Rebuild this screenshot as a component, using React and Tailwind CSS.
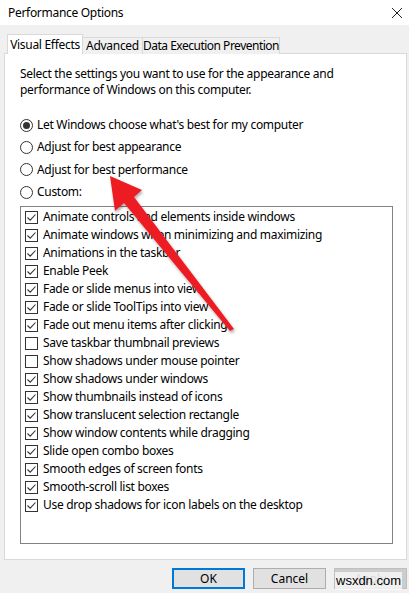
const font = { fontFamily: '"Noto Sans", "Liberation Sans", sans-serif' };

const effects = [
  ["Animate controls and elements inside windows", true],
  ["Animate windows when minimizing and maximizing", true],
  ["Animations in the taskbar", true],
  ["Enable Peek", true],
  ["Fade or slide menus into view", true],
  ["Fade or slide ToolTips into view", true],
  ["Fade out menu items after clicking", true],
  ["Save taskbar thumbnail previews", false],
  ["Show shadows under mouse pointer", false],
  ["Show shadows under windows", true],
  ["Show thumbnails instead of icons", true],
  ["Show translucent selection rectangle", true],
  ["Show window contents while dragging", true],
  ["Slide open combo boxes", true],
  ["Smooth edges of screen fonts", true],
  ["Smooth-scroll list boxes", true],
  ["Use drop shadows for icon labels on the desktop", true],
];

const radios = [
  ["Let Windows choose what's best for my computer", true],
  ["Adjust for best appearance", false],
  ["Adjust for best performance", false],
  ["Custom:", false],
];

const Radio = ({ label, on }) => (
  <div className="flex items-center h-[22.3px]">
    <span className="w-[13px] h-[13px] rounded-full border border-[#333] bg-white flex items-center justify-center">
      {on && <span className="w-[7px] h-[7px] rounded-full bg-[#333]" />}
    </span>
    <span className="ml-[4px]">{label}</span>
  </div>
);

const Check = ({ label, on }) => (
  <div className="flex items-center h-[18px]">
    <span className="w-[13px] h-[13px] border border-[#333] bg-white flex items-center justify-center">
      {on && (
        <svg width="11" height="11" viewBox="0 0 11 11">
          <path d="M1.5 5.5 L4.2 8.2 L9.5 2.5" fill="none" stroke="#333" strokeWidth="1.1" />
        </svg>
      )}
    </span>
    <span className="ml-[5px]">{label}</span>
  </div>
);

const App = () => {
  return (
    <div className="relative w-[409px] h-[593px] bg-[#f0f0f0] text-[12px] tracking-[-0.3px] text-black overflow-hidden" style={font}>
      {/* title bar */}
      <div className="h-[25px] bg-white flex items-center justify-between pl-[8px] pr-[6px]">
        <span>Performance Options</span>
        <svg width="12" height="12" viewBox="0 0 12 12">
          <path d="M1 1 L11 11 M11 1 L1 11" stroke="#222" strokeWidth="1" />
        </svg>
      </div>

      <div className="px-[4px] pt-[9px]">
        {/* tabs */}
        <div className="flex items-end h-[20px] pl-[3px] relative z-10 whitespace-nowrap">
          <div className="h-[20px] w-[76px] bg-white border border-b-0 border-[#d9d9d9] flex items-center justify-center">
            Visual Effects
          </div>
          <div className="h-[17px] w-[60px] bg-[#f0f0f0] border border-l-0 border-b-0 border-[#d9d9d9] flex items-center justify-center">
            Advanced
          </div>
          <div className="h-[17px] w-[137px] bg-[#f0f0f0] border border-l-0 border-b-0 border-[#d9d9d9] flex items-center justify-center tracking-[-0.5px]">
            Data Execution Prevention
          </div>
        </div>

        {/* panel */}
        <div className="-mt-[1px] h-[507px] w-[403px] bg-white border border-[#d9d9d9] pl-[15px] pr-[14px] pt-[12px]">
          <p className="leading-[16px]">
            Select the settings you want to use for the appearance and
            <br />
            performance of Windows on this computer.
          </p>
          <div className="mt-[16px]">
            {radios.map(([l, on]) => (
              <Radio key={l} label={l} on={on} />
            ))}
          </div>
          <div className="mt-[3px] h-[338px] w-[373px] border border-[#828282] pl-[4px] pt-[1px]">
            {effects.map(([l, on]) => (
              <Check key={l} label={l} on={on} />
            ))}
          </div>
        </div>
      </div>

      {/* buttons */}
      <div className="flex justify-end gap-[8px] pr-[2px] mt-[8px] tracking-normal">
        <button className="w-[73px] h-[21px] bg-[#e1e1e1] border-2 border-[#0078d7]">OK</button>
        <button className="w-[73px] h-[21px] bg-[#e1e1e1] border border-[#adadad]">Cancel</button>
        <button className="w-[73px] h-[21px] bg-[#cccccc] border border-[#bfbfbf] text-[#838383] leading-[12px] items-start">Apply</button>
      </div>

      {/* watermark */}
      <div className="absolute left-[335px] top-[572px] bg-white/70 px-[1px] leading-[18px] text-[13px] tracking-normal text-black" style={{ fontFamily: '"Liberation Sans", sans-serif' }}>
        wsxdn.com
      </div>

      {/* red arrow annotation */}
      <svg className="absolute left-0 top-0 pointer-events-none" width="409" height="593">
        <defs>
          <filter id="sh" x="-20%" y="-20%" width="140%" height="140%">
            <feDropShadow dx="1" dy="2" stdDeviation="1.5" floodColor="#000" floodOpacity="0.35" />
          </filter>
        </defs>
        <polygon
          points="110,176 142,190 134,197 234,329 230,331 124,203 115,211"
          fill="#ec1c24"
          filter="url(#sh)"
        />
      </svg>
    </div>
  );
};

export default App;
